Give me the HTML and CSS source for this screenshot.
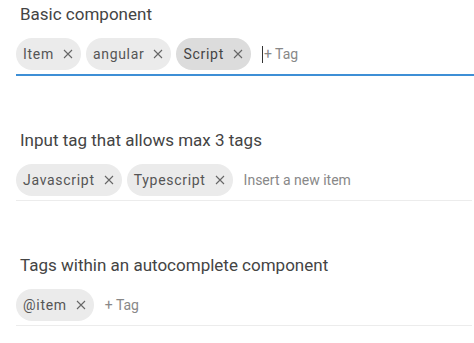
FILE: index.html
```html
<!DOCTYPE html>
<html lang="en">
<head>
    <meta charset="UTF-8">
    <meta name="viewport" content="width=device-width, initial-scale=1.0">
    <title>Input Tags</title>
    <link rel="stylesheet" href="styles.css">
</head>
<body>
    <div class="container">
        <div class="section">
            <h3>Basic component</h3>
            <div class="tag-field focused">
                <span class="chip">Item <svg class="remove" viewBox="0 0 10 10"><path d="M1 1L9 9M9 1L1 9"/></svg></span>
                <span class="chip">angular <svg class="remove" viewBox="0 0 10 10"><path d="M1 1L9 9M9 1L1 9"/></svg></span>
                <span class="chip selected">Script <svg class="remove" viewBox="0 0 10 10"><path d="M1 1L9 9M9 1L1 9"/></svg></span>
                <span class="input"><span class="caret"></span>+ Tag</span>
            </div>
        </div>
        <div class="section">
            <h3>Input tag that allows max 3 tags</h3>
            <div class="tag-field">
                <span class="chip">Javascript <svg class="remove" viewBox="0 0 10 10"><path d="M1 1L9 9M9 1L1 9"/></svg></span>
                <span class="chip">Typescript <svg class="remove" viewBox="0 0 10 10"><path d="M1 1L9 9M9 1L1 9"/></svg></span>
                <span class="input">Insert a new item</span>
            </div>
        </div>
        <div class="section">
            <h3>Tags within an autocomplete component</h3>
            <div class="tag-field">
                <span class="chip">@item <svg class="remove" viewBox="0 0 10 10"><path d="M1 1L9 9M9 1L1 9"/></svg></span>
                <span class="input">+ Tag</span>
            </div>
        </div>
    </div>
</body>
</html>
```

FILE: styles.css
```css
body {
    margin: 0;
    background-color: #fff;
    font-family: Roboto, 'Liberation Sans', sans-serif;
    color: #444;
}
.container {
    padding: 2px 2px 0 16px;
}
.section {
    margin-bottom: 52px;
}
.section:last-child {
    margin-bottom: 0;
}
h3 {
    margin: 0 0 12px 4px;
    font-size: 17px;
    font-weight: 400;
    line-height: 24px;
    color: #444;
}
.tag-field {
    display: flex;
    align-items: center;
    gap: 5px;
    padding-bottom: 4px;
    border-bottom: 1px solid #ececec;
}
.tag-field.focused {
    border-bottom: 2px solid #3d8fd6;
    margin-right: -2px;
}
.chip {
    display: flex;
    align-items: center;
    height: 32px;
    padding: 0 8px 0 7px;
    border-radius: 16px;
    background-color: #ebebeb;
    font-size: 14px;
    letter-spacing: 0.7px;
    color: #555;
}
.chip.selected {
    background-color: #dcdcdc;
    color: #444;
}
.remove {
    width: 10px;
    height: 10px;
    margin-left: 9px;
    fill: none;
    stroke: #666;
    stroke-width: 1.1;
}
.input {
    display: flex;
    align-items: center;
    margin-left: 6px;
    font-size: 14px;
    color: #888;
}
.caret {
    width: 1px;
    height: 17px;
    background-color: #333;
    margin-right: 1px;
}
```
